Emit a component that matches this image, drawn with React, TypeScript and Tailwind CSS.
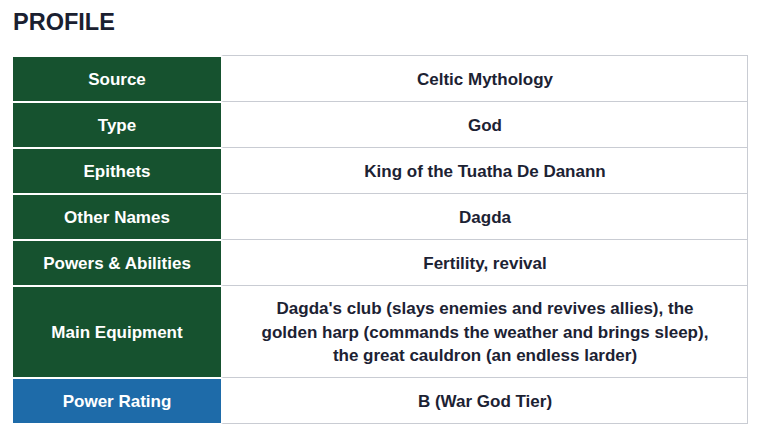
const ROWS: { label: string; value: string[]; blue?: boolean }[] = [
  { label: "Source", value: ["Celtic Mythology"] },
  { label: "Type", value: ["God"] },
  { label: "Epithets", value: ["King of the Tuatha De Danann"] },
  { label: "Other Names", value: ["Dagda"] },
  { label: "Powers & Abilities", value: ["Fertility, revival"] },
  {
    label: "Main Equipment",
    value: [
      "Dagda's club (slays enemies and revives allies), the",
      "golden harp (commands the weather and brings sleep),",
      "the great cauldron (an endless larder)",
    ],
  },
  { label: "Power Rating", value: ["B (War God Tier)"], blue: true },
];

export default function App() {
  return (
    <div className="w-[760px] h-[436px] bg-white px-[13px] pt-[7px] font-[family-name:'Liberation_Sans',Arial,sans-serif]">
      <h2 className="text-[23.5px] leading-[30px] font-bold text-[#1a2030]">PROFILE</h2>
      <table className="mt-[18px] w-[735px] border-separate border-spacing-0 text-[17px] font-bold">
        <tbody>
          {ROWS.map((r, i) => {
            const last = i === ROWS.length - 1;
            return (
              <tr key={r.label}>
                <th
                  className={`w-[208px] border-t-2 border-white px-3 pt-[11px] pb-[9px] text-center leading-6 text-white ${
                    r.blue ? "bg-[#1e6ba9]" : "bg-[#16522f]"
                  } ${last ? "border-b" : ""}`}
                >
                  {r.label}
                </th>
                <td
                  className={`border-l-2 border-t border-r border-l-white border-t-[#c9ccd3] border-r-[#c9ccd3] px-4 pt-[11px] pb-[9.5px] text-center leading-[23.5px] text-[#1c2233] ${
                    last ? "border-b border-b-[#c9ccd3]" : ""
                  }`}
                >
                  {r.value.map((l) => (
                    <div key={l}>{l}</div>
                  ))}
                </td>
              </tr>
            );
          })}
        </tbody>
      </table>
    </div>
  );
}
